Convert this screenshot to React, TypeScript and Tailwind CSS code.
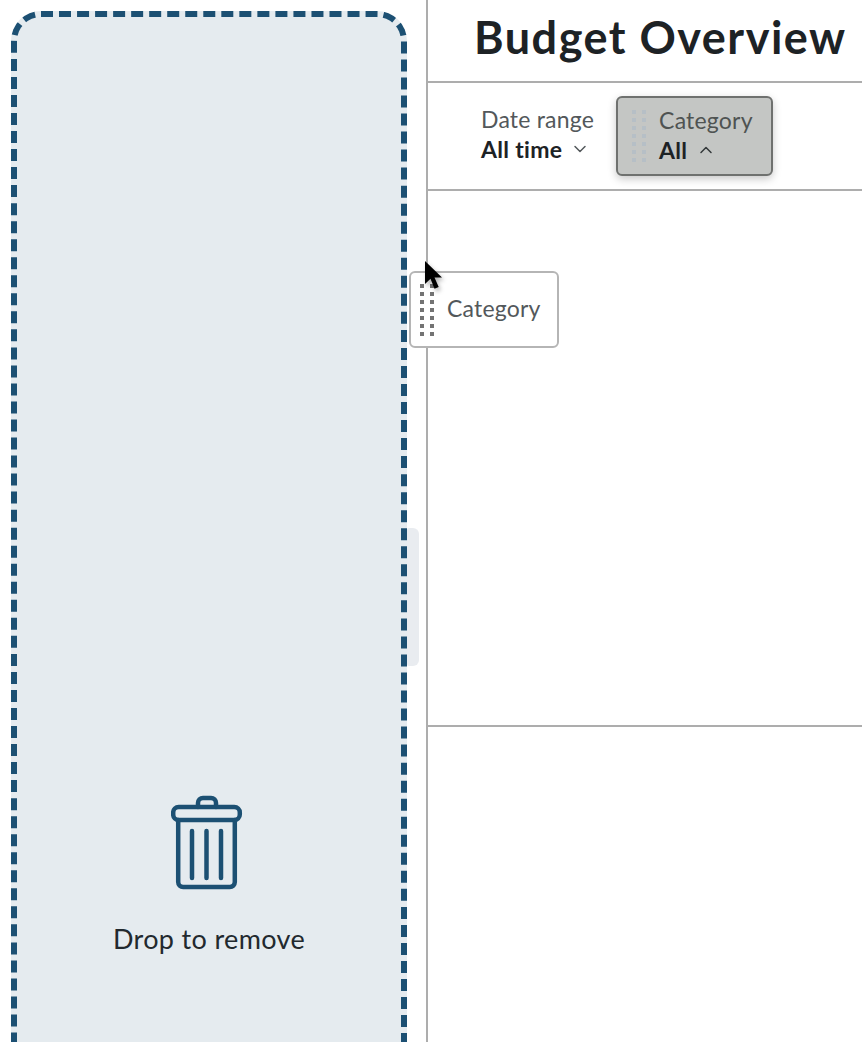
import { ChevronDown, ChevronUp } from 'lucide-react';

const font = "font-['Lato','Noto_Sans',sans-serif]";

function Grip({ dot }: { dot: string }) {
  return (
    <div className="grid grid-cols-2 gap-x-[6px] gap-y-[4px]">
      {Array.from({ length: 14 }).map((_, i) => (
        <span key={i} className={`w-[4px] h-[4px] ${dot}`} />
      ))}
    </div>
  );
}

function TrashIcon() {
  return (
    <svg width="72" height="96" viewBox="0 0 72 96" fill="none" stroke="#1c5073" strokeWidth="4.5" strokeLinecap="round" strokeLinejoin="round" className="ml-[-5px]">
      <path d="M27 12V8a5 5 0 0 1 5-5h8a5 5 0 0 1 5 5v4" />
      <rect x="2.2" y="12" width="66.6" height="13" rx="5.5" />
      <path d="M7.2 25v62a5 5 0 0 0 5 5h46.6a5 5 0 0 0 5-5V25" />
      <path d="M21 36v47M35.5 36v47M50 36v47" />
    </svg>
  );
}

function Cursor() {
  return (
    <svg width="22" height="32" viewBox="0 0 22 32" className="drop-shadow-[2px_3px_2px_rgba(0,0,0,0.3)]">
      <path d="M1 0v23l5.5-5.2 4 10 4.2-1.8-4.2-9.6H18z" fill="#000" />
    </svg>
  );
}

export default function App() {
  return (
    <div className={`relative flex h-[1042px] w-[862px] overflow-hidden bg-white ${font}`}>
      <aside className="w-[426px] shrink-0 pl-[11px] pr-[19px] pt-[11px]">
        <div className="flex h-[1100px] flex-col items-center rounded-[30px] border-[6px] border-dashed border-[#1c5073] bg-[#e5ebef] pt-[778px]">
          <TrashIcon />
          <span className="mt-[32px] text-[27px] leading-[32px] tracking-[0.35px] text-[#22292e]">Drop to remove</span>
        </div>
      </aside>

      <main className="flex-1 border-l-2 border-[#adadad]">
        <header className="flex h-[83px] items-center border-b-2 border-[#adadad] pl-[46px] pb-[7px]">
          <h1 className="whitespace-nowrap text-[45px] leading-[52px] font-bold tracking-[1.5px] text-[#1d2225]">Budget Overview</h1>
        </header>

        <div className="flex h-[108px] items-center gap-[22px] border-b-2 border-[#adadad] pl-[53px] pb-[4px]">
          <div className="flex flex-col">
            <span className="text-[23px] leading-[30px] tracking-[0.2px] text-[#53585b]">Date range</span>
            <div className="flex items-center gap-[8px]">
              <span className="text-[23px] leading-[30px] font-bold tracking-[0.3px] text-[#1d2225]">All time</span>
              <ChevronDown size={20} strokeWidth={1.8} className="text-[#53585b]" />
            </div>
          </div>
          <div className="mt-[3px] flex h-[80px] w-[157px] items-center gap-[13px] rounded-[6px] border-2 border-[#6f716f] bg-[#c4c6c4] pl-[14px] shadow-[0_3px_8px_rgba(0,0,0,0.22)]">
            <Grip dot="bg-[#b6bfc6]" />
            <div className="mb-[1px] flex flex-col">
              <span className="text-[23px] leading-[30px] tracking-[0.2px] text-[#4f5352]">Category</span>
              <div className="flex items-center gap-[9px]">
                <span className="text-[23px] leading-[30px] font-bold tracking-[0.3px] text-[#1d2225]">All</span>
                <ChevronUp size={20} strokeWidth={1.8} className="text-[#33383a]" />
              </div>
            </div>
          </div>
        </div>

        <div className="h-[536px] border-b-2 border-[#adadad]" />
      </main>

      {/* scroll handle */}
      <div className="absolute left-[407px] top-[528px] h-[138px] w-[12px] rounded-r-[6px] rounded-l-[2px] bg-[#e9ecf0]" />

      {/* dragged chip */}
      <div className="absolute left-[409px] top-[271px] flex h-[77px] w-[150px] items-center gap-[13px] rounded-[6px] border-2 border-[#b5b5b5] bg-white pl-[9px]">
        <Grip dot="bg-[#737373]" />
        <span className="mb-[4px] text-[23px] leading-[30px] tracking-[0.2px] text-[#53585b]">Category</span>
      </div>

      <div className="absolute left-[424px] top-[261px]">
        <Cursor />
      </div>
    </div>
  );
}
